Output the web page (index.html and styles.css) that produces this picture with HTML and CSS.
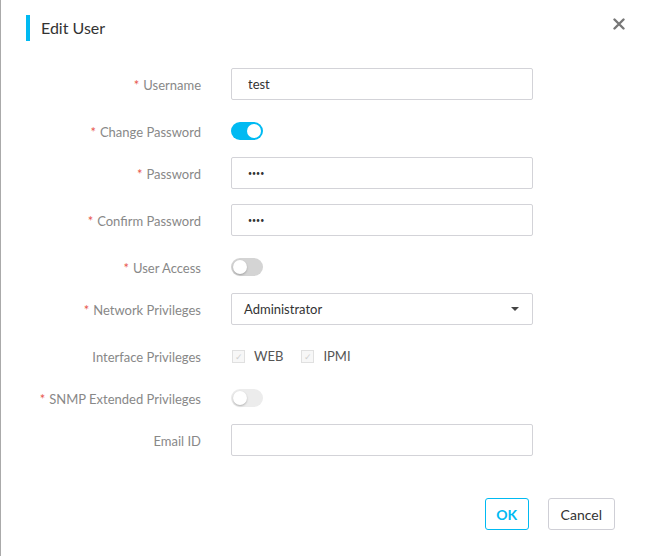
FILE: index.html
```html
<!DOCTYPE html>
<html lang="en">
<head>
<meta charset="UTF-8" />
  <meta name="viewport" content="width=device-width, initial-scale=1.0"/>
  <title>Edit User</title>
  <link rel="stylesheet" href="styles.css">
</head>
<body>
<div class="modal">
  <div class="modal-header">
    <h2 class="modal-title">Edit User</h2>
    <button class="close-btn" type="button" aria-label="Close">
      <svg width="12" height="12" viewBox="0 0 12 12"><path d="M1.5 1.5 L10.5 10.5 M10.5 1.5 L1.5 10.5" stroke="#777" stroke-width="2.4" stroke-linecap="round"/></svg>
    </button>
  </div>

  <form class="user-form">
    <div class="form-item">
      <label class="required">Username</label>
      <div class="control"><input class="text-input" type="text" value="test"></div>
    </div>
    <div class="form-item short">
      <label class="required">Change Password</label>
      <div class="control"><span class="switch on"></span></div>
    </div>
    <div class="form-item">
      <label class="required">Password</label>
      <div class="control"><input class="text-input" type="password" value="test"></div>
    </div>
    <div class="form-item">
      <label class="required">Confirm Password</label>
      <div class="control"><input class="text-input" type="password" value="test"></div>
    </div>
    <div class="form-item short">
      <label class="required">User Access</label>
      <div class="control"><span class="switch"></span></div>
    </div>
    <div class="form-item">
      <label class="required">Network Privileges</label>
      <div class="control">
        <div class="select">
          <span>Administrator</span>
          <span class="caret"></span>
        </div>
      </div>
    </div>
    <div class="form-item short">
      <label>Interface Privileges</label>
      <div class="control checks">
        <span class="check"><span class="box">&#10003;</span>WEB</span>
        <span class="check"><span class="box">&#10003;</span>IPMI</span>
      </div>
    </div>
    <div class="form-item short">
      <label class="required">SNMP Extended Privileges</label>
      <div class="control"><span class="switch disabled"></span></div>
    </div>
    <div class="form-item">
      <label>Email ID</label>
      <div class="control"><input class="text-input" type="text" value=""></div>
    </div>
  </form>

  <div class="modal-footer">
    <button class="btn btn-primary" type="button">OK</button>
    <button class="btn" type="button">Cancel</button>
  </div>
</div>
</body>
</html>
```

FILE: styles.css
```css
* {
  box-sizing: border-box;
}
body {
  margin: 0;
  font-family: Lato, 'Noto Sans', sans-serif;
  background: #aaa;
  height: 556px;
  overflow: hidden;
}
.modal {
  margin-left: 1px;
  height: 556px;
  background: #fff;
}
.modal-header {
  display: flex;
  justify-content: space-between;
  align-items: flex-start;
  padding: 15px 26px 0 25px;
}
.modal-title {
  margin: 0;
  height: 26px;
  line-height: 26px;
  padding-left: 11px;
  border-left: 4px solid #00baf2;
  font-size: 16px;
  font-weight: normal;
  color: #333;
}
.close-btn {
  border: none;
  background: none;
  padding: 0;
  margin-top: 3px;
  width: 12px;
  height: 12px;
  cursor: pointer;
}
.close-btn svg {
  display: block;
}
.user-form {
  padding-top: 27px;
}
.form-item {
  display: grid;
  grid-template-columns: 200px 302px;
  column-gap: 30px;
  align-items: center;
  height: 32px;
  margin-bottom: 15px;
}
.form-item.short {
  margin-bottom: 10px;
}
.form-item label {
  text-align: right;
  padding-top: 2px;
  font-size: 13px;
  color: #888;
}
.form-item label.required::before {
  content: "*";
  color: #e8574c;
  margin-right: 4px;
}
.control {
  display: flex;
  align-items: center;
}
.text-input {
  width: 302px;
  height: 32px;
  border: 1px solid #d3d3d8;
  border-radius: 2px;
  padding: 0 16px;
  font-family: inherit;
  font-size: 13px;
  color: #333;
  outline: none;
}
.text-input[type="password"] {
  font-size: 7px;
  letter-spacing: 0;
}
.switch {
  position: relative;
  display: inline-block;
  width: 32px;
  height: 18px;
  border-radius: 9px;
  background: #d4d4d4;
}
.switch::after {
  content: "";
  position: absolute;
  top: 2px;
  left: 2px;
  width: 14px;
  height: 14px;
  border-radius: 50%;
  background: #fff;
  box-shadow: 0 1px 2px rgba(0,0,0,0.25);
}
.switch.on {
  background: #00baf2;
}
.switch.on::after {
  left: 16px;
  box-shadow: none;
}
.switch.disabled {
  background: #ececec;
}
.select {
  display: flex;
  justify-content: space-between;
  align-items: center;
  width: 302px;
  height: 32px;
  border: 1px solid #d3d3d8;
  border-radius: 2px;
  padding: 0 13px 0 12px;
  font-size: 13px;
  color: #333;
}
.caret {
  width: 0;
  height: 0;
  border-left: 4px solid transparent;
  border-right: 4px solid transparent;
  border-top: 4px solid #444;
}
.checks {
  gap: 17px;
  font-size: 13px;
  color: #555;
}
.check {
  display: flex;
  align-items: center;
  margin-left: 1px;
}
.box {
  display: inline-block;
  width: 13px;
  height: 13px;
  margin-right: 9px;
  border: 1px solid #e0e0e0;
  background: #f7f7f7;
  color: #d0d0d0;
  font-size: 9px;
  line-height: 11px;
  text-align: center;
}
.modal-footer {
  display: flex;
  justify-content: flex-end;
  gap: 19px;
  padding: 27px 36px 0 0;
}
.btn {
  height: 32px;
  padding: 0 12px;
  border: 1px solid #cfcfd6;
  border-radius: 3px;
  background: #fff;
  font-family: inherit;
  font-size: 14px;
  color: #333;
  cursor: pointer;
}
.btn-primary {
  width: 44px;
  padding: 0;
  border-color: #00baf2;
  color: #00baf2;
  font-weight: bold;
}
```
